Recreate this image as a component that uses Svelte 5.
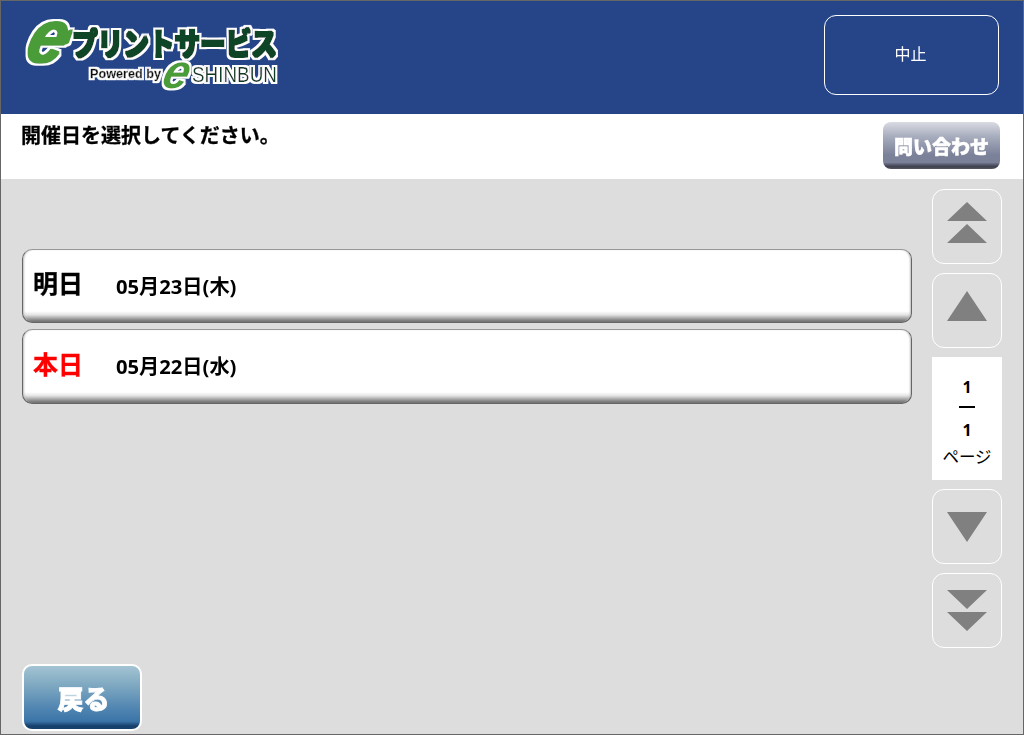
<script>
  const rows = [
    { label: '明日', date: '05月23日(木)', today: false },
    { label: '本日', date: '05月22日(水)', today: true }
  ];
</script>

<div class="page">
  <header class="top">
    <svg class="logo" viewBox="0 0 260 76" width="260" height="76" aria-label="eプリントサービス Powered by e SHINBUN">
      <defs>
        <filter id="halo-big" x="-10%" y="-20%" width="120%" height="140%">
          <feMorphology in="SourceGraphic" operator="dilate" radius="0.5" result="thick" />
          <feMorphology in="SourceAlpha" operator="dilate" radius="2.5" result="grown" />
          <feFlood flood-color="#fff" />
          <feComposite in2="grown" operator="in" result="white" />
          <feMerge><feMergeNode in="white" /><feMergeNode in="thick" /></feMerge>
        </filter>
        <filter id="halo-small" x="-10%" y="-20%" width="120%" height="140%">
          <feMorphology in="SourceAlpha" operator="dilate" radius="1.6" result="grown" />
          <feFlood flood-color="#fff" />
          <feComposite in2="grown" operator="in" result="white" />
          <feMerge><feMergeNode in="white" /><feMergeNode in="SourceGraphic" /></feMerge>
        </filter>
      </defs>
      <g filter="url(#halo-big)">
        <text x="0" y="0" class="bige" transform="translate(1 44) skewX(-16) scale(1.1 1.2)">e</text>
        <path class="tail" d="M38 22 C42 17 45 14 50 12 L46 24 C43 26 41 26 38 26Z" />
        <text x="50" y="37" class="title" textLength="205" lengthAdjust="spacingAndGlyphs">プリントサービス</text>
      </g>
      <g filter="url(#halo-small)">
        <text x="68" y="60" class="powered" textLength="71" lengthAdjust="spacingAndGlyphs">Powered by</text>
        <text x="0" y="0" class="smalle" transform="translate(138 70) skewX(-16) scale(1.16 1.2)">e</text>
        <text x="170" y="64" class="shinbun" textLength="85" lengthAdjust="spacingAndGlyphs">SHINBUN</text>
      </g>
    </svg>
    <button class="cancel">中止</button>
  </header>

  <div class="notice">
    <h1>開催日を選択してください。</h1>
    <button class="inquiry">問い合わせ</button>
  </div>

  <main class="body">
    <div class="content">
      <ul class="list">
        {#each rows as row}
          <li class="row">
            <span class="label" class:today={row.today}>{row.label}</span>
            <span class="date">{row.date}</span>
          </li>
        {/each}
      </ul>
      <div class="footer"><button class="back">戻る</button></div>
    </div>

    <nav class="pager">
      <button class="pg first" aria-label="first">
        <svg width="40" height="41" viewBox="0 0 40 41"><path d="M20 0 40 19H0ZM20 22 40 41H0Z" /></svg>
      </button>
      <button class="pg prev" aria-label="previous">
        <svg width="40" height="30" viewBox="0 0 40 30"><path d="M20 0 40 30H0Z" /></svg>
      </button>
      <div class="count">
        <span class="num">1</span>
        <span class="bar"></span>
        <span class="num">1</span>
        <span class="unit">ページ</span>
      </div>
      <button class="pg" aria-label="next">
        <svg width="40" height="30" viewBox="0 0 40 30"><path d="M0 0H40L20 30Z" /></svg>
      </button>
      <button class="pg" aria-label="last">
        <svg width="40" height="41" viewBox="0 0 40 41"><path d="M0 0H40L20 19ZM0 22H40L20 41Z" /></svg>
      </button>
    </nav>
  </main>
</div>

<style>
  :global(body) { margin: 0; background: #ddd; }
  .page {
    box-sizing: border-box;
    width: 1024px;
    height: 735px;
    border: 1px solid #666;
    display: flex;
    flex-direction: column;
    font-family: "Open Sans", "Noto Sans CJK JP", sans-serif;
    overflow: hidden;
    background: #ddd;
  }
  button { font-family: inherit; padding: 0; cursor: pointer; }

  .top {
    height: 113px;
    flex: none;
    background: #264589;
    display: flex;
    justify-content: space-between;
    align-items: flex-start;
    padding: 14px 24px 0 21px;
    box-sizing: border-box;
  }
  .logo { margin-top: 3px; overflow: visible; }
  .bige { font: italic 900 62px "Liberation Sans", sans-serif; fill: #4a9c38; }
  .tail { fill: #4a9c38; }
  .title { font: 900 31px "Noto Sans CJK JP", sans-serif; fill: #0e4425; }
  .powered { font: 700 13px "Liberation Sans", sans-serif; fill: #111; stroke: #111; stroke-width: 0.3px; }
  .smalle { font: italic 900 40px "Liberation Sans", sans-serif; fill: #4a9c38; }
  .shinbun { font: 400 22px "Liberation Sans", sans-serif; fill: #0e3a25; }
  .cancel {
    width: 175px;
    height: 80px;
    background: transparent;
    border: 1px solid #fff;
    border-radius: 12px;
    color: #fff;
    font-size: 16px;
    padding: 0 2px 4px 0;
  }

  .notice {
    height: 65px;
    flex: none;
    background: #fff;
    display: flex;
    justify-content: space-between;
    align-items: flex-start;
    padding: 8px 23px 0 20px;
    box-sizing: border-box;
  }
  h1 { margin: 0; font-size: 20px; font-weight: 700; line-height: 28px; color: #000; -webkit-text-stroke: 0.3px #000; }
  .inquiry {
    width: 117px;
    height: 47px;
    border: none;
    border-radius: 8px;
    color: #fff;
    font-size: 19px;
    font-weight: 900;
    -webkit-text-stroke: 0.5px #fff;
    background: linear-gradient(#d9dbe2 0%, #a9aebf 30%, #7b8199 70%, #7b8199 86%, #55586a 91%, #3f4150 95%, #55565e 100%);
  }

  .body { flex: 1; display: flex; min-height: 0; }
  .content { flex: 1; display: flex; flex-direction: column; padding-left: 21px; }
  .list { list-style: none; margin: 0; padding: 70px 0 0; width: 890px; flex: 1; display: flex; flex-direction: column; gap: 6px; }
  .row {
    box-sizing: border-box;
    height: 74px;
    display: flex;
    align-items: center;
    background: linear-gradient(#fff 0, #fff 85%, #e4e4e4 90%, #8a8a8a 97%, #666 100%);
    border: 1px solid #666;
    border-top-color: #999;
    border-radius: 10px;
    padding: 0 0 2px 10px;
    box-shadow: inset 2px 0 2px -1px #bbb, inset -2px 0 2px -1px #bbb;
  }
  .row:last-child { height: 75px; }
  .label { width: 83px; font-size: 25px; font-weight: 700; color: #000; position: relative; top: -3px; -webkit-text-stroke: 0.3px currentColor; }
  .label.today { color: #f00; }
  .date { font-size: 20.2px; font-weight: 700; color: #000; }

  .footer { height: 70px; flex: none; }
  .back {
    box-sizing: border-box;
    width: 120px;
    height: 67px;
    border: 2px solid #fff;
    border-radius: 10px;
    color: #fff;
    font-size: 26px;
    font-weight: 900;
    padding-left: 3px;
    -webkit-text-stroke: 0.8px #fff;
    background: linear-gradient(#a3c4d3 0%, #7fa9c1 30%, #4d83b0 70%, #3a74a7 88%, #17416d 95%, #17416d 100%);
  }

  .pager {
    width: 70px;
    flex: none;
    margin: 10px 21px 0 20px;
    display: flex;
    flex-direction: column;
    gap: 9px;
  }
  .pg {
    box-sizing: border-box;
    width: 70px;
    height: 75px;
    border: 1px solid #fff;
    border-radius: 12px;
    background: transparent;
    display: flex;
    align-items: center;
    justify-content: center;
  }
  .pg.first { padding-bottom: 8px; }
  .pg.prev { padding-bottom: 10px; }
  .pg svg { fill: #808080; display: block; }
  .count {
    height: 123px;
    background: #fff;
    display: flex;
    flex-direction: column;
    align-items: center;
    color: #000;
    padding-top: 20px;
    box-sizing: border-box;
  }
  .num { font-size: 16px; font-weight: 700; line-height: 20px; }
  .bar { width: 16px; height: 2px; background: #000; margin: 9px 0 12px; }
  .unit { font-size: 16.5px; line-height: 24px; margin-top: 5px; }
</style>
